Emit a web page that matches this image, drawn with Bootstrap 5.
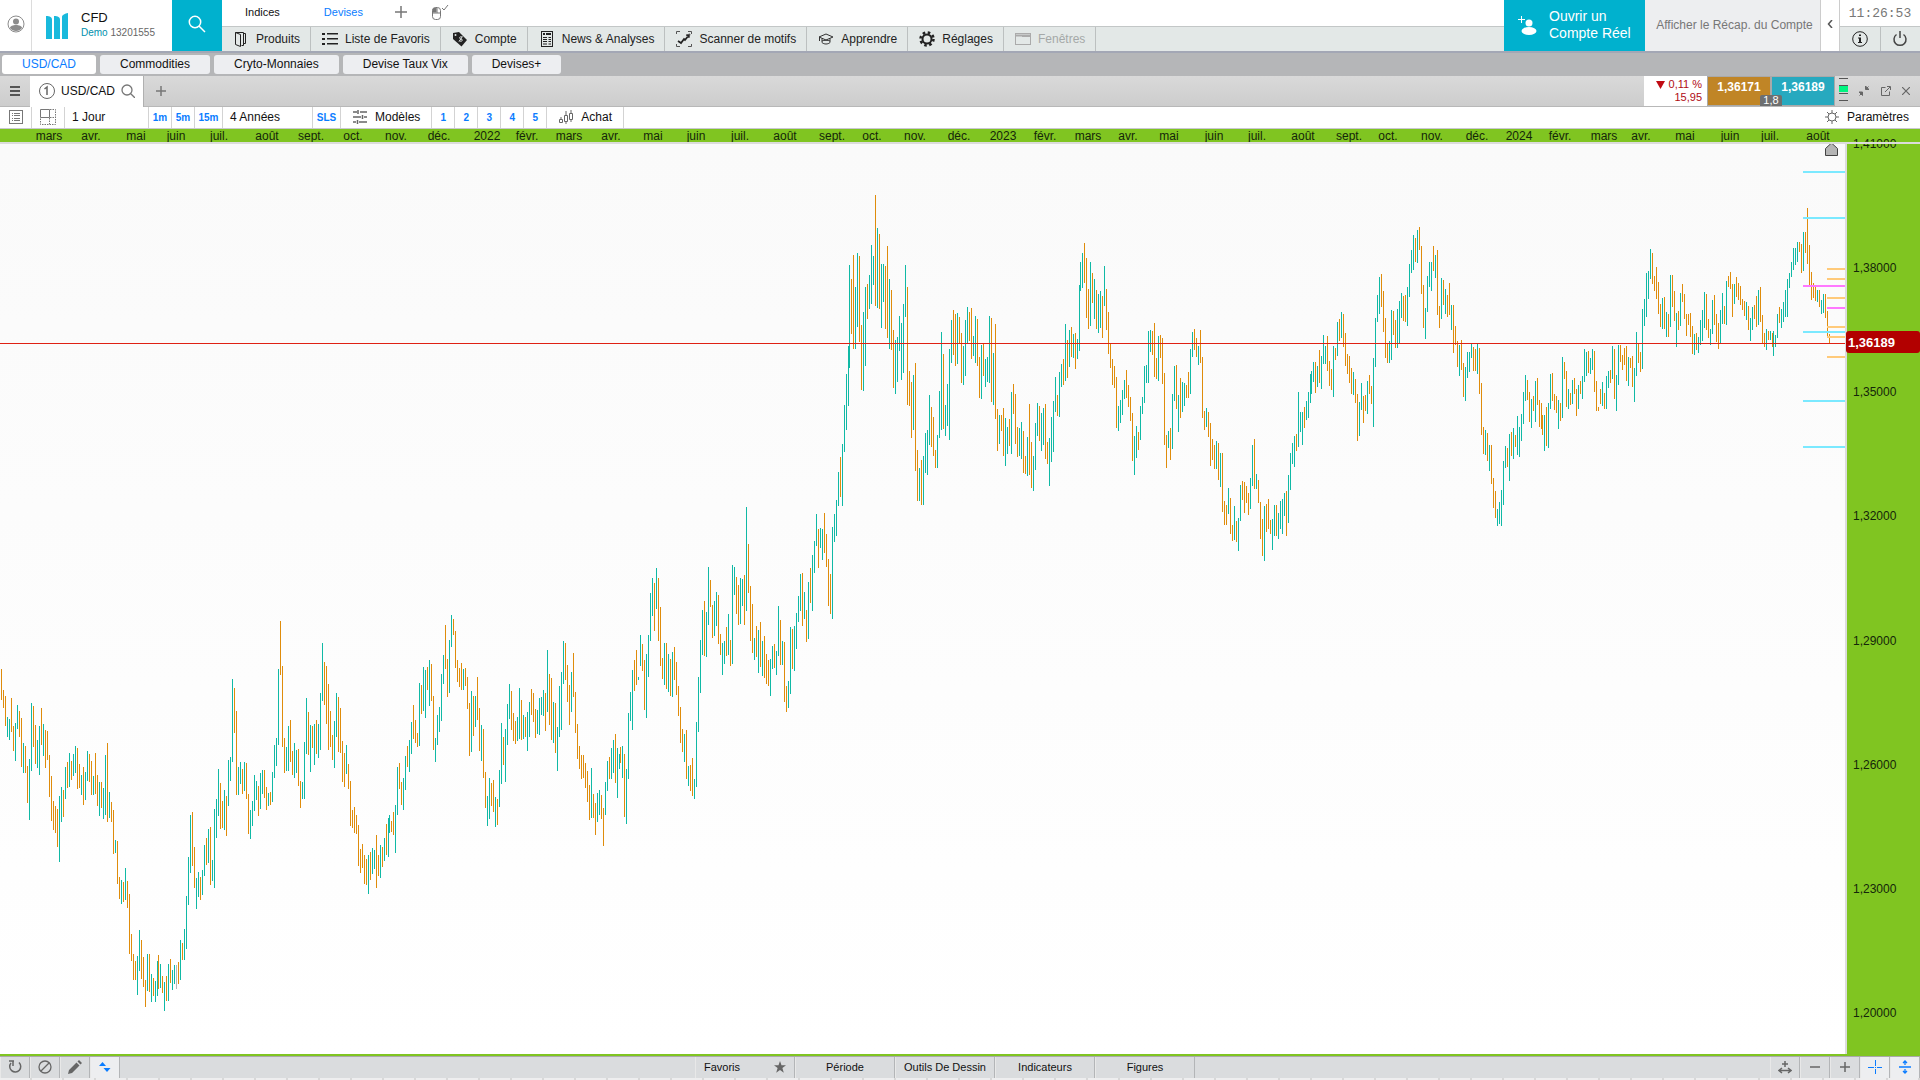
<!DOCTYPE html>
<html lang="fr">
<head>
<meta charset="utf-8">
<meta name="viewport" content="width=device-width, initial-scale=1">
<title>USD/CAD - CFD</title>
<link rel="stylesheet" href="https://cdn.jsdelivr.net/npm/bootstrap@5.3.0/dist/css/bootstrap.min.css">
<style>
  body { font-family: "Liberation Sans", Arial, sans-serif; font-size: 12px; line-height: 14px; color: #111; background: #fff; }
  button, a { font: inherit; color: inherit; text-decoration: none; }
  button { border: 0; background: none; padding: 0; white-space: nowrap; }
  svg { display: block; flex: none; }
  .app { min-height: 100vh; }
  .topbar { height: 53px; border-bottom: 2px solid #a3a7b5; }
  .topbar, .tools { white-space: nowrap; }
  .avatar { width: 32px; border-right: 1px solid #dcdcdc; padding-bottom: 3px; }
  .brand { width: 140px; padding-left: 14px; gap: 13px; }
  .brand-name { font-size: 13px; line-height: 15px; }
  .brand-id { font-size: 10px; line-height: 16px; color: #666; }
  .brand-id b { font-weight: normal; color: #0090ad; }
  .teal { background: #00b1ce; color: #fff; }
  .find { width: 50px; padding-bottom: 3px; }
  .spaces { height: 26px; font-size: 11px; padding: 0 0 2px 23px; gap: 44px; }
  .spaces .on { color: #0a7cff; }
  .spaces button + button { margin-left: -20px; }
  .spaces a + button { margin-left: -12px; }
  .menu { background: #e3e8e7; border-top: 1px solid #c3c7c7; height: 25px; }
  .menu button { padding: 0 10px 0 11px; gap: 7px; border-right: 1px solid #bcc0c0; color: #222; }
  .menu button:disabled { color: #a5a8a8; }
  .real { width: 141px; padding: 0 0 2px 14px; gap: 11px; font-size: 14px; line-height: 17px; text-align: left; }
  .recap { width: 176px; background: #edeef0; color: #777; border-right: 1px solid #ccc; padding: 0 0 2px 4px; }
  .chev { width: 19px; border-right: 1px solid #ccc; padding-bottom: 4px; }
  .clock { width: 80px; }
  .clock time { height: 26px; font: 13px/28px "Liberation Mono", monospace; color: #777; }
  .clock .half { background: #e3e8e7; border-top: 1px solid #c3c7c7; }
  .half button + button { border-left: 1px solid #bcc0c0; }
  .boards { background: #b5b6b8; height: 23px; padding: 2px; gap: 4px; }
  .boards a { background: #edeef1; border-radius: 3px; padding: 0 20px; height: 19px; line-height: 18px; }
  .boards a.on { background: #fff; color: #0a7cff; }
  .charts { height: 31px; background: linear-gradient(#d9d9d9, #cdcdcd); border-bottom: 1px solid #b8b8b8; }
  .burger { width: 30px; padding-bottom: 1px; }
  .doc { width: 114px; height: 31px; background: #fff; gap: 6px; padding: 0 0 2px 9px; border-right: 1px solid #b0b0b0; }
  .change { width: 63px; background: #fff; color: #b00b13; font-size: 11px; line-height: 13px; padding: 2px 5px 0 0; }
  .quote { width: 64px; font-weight: bold; color: #fff; padding-bottom: 8px; border: 1px solid #a9a9a9; }
  .sell { background: #c08526; }
  .buy { background: #27a9bf; }
  .spread { left: 50%; bottom: 0; width: 22px; height: 11px; line-height: 11px; font-size: 11px; background: #6d6f70; color: #fff; border-radius: 2px 2px 0 0; transform: translateX(-50%); }
  .winbtns { width: 85px; padding: 0 10px 0 4px; }
  .tools { height: 22px; border-bottom: 1px solid #c9c9d0; }
  .tools > button { border-right: 1px solid #d3d3d3; padding-bottom: 1px; }
  .tools .num { width: 23px; font-size: 10px; font-weight: bold; color: #0a7cff; padding-top: 1px; }
  .cell-a { width: 32px; } .cell-b { width: 33px; } .tools .cell-c { width: 28px; }
  .tools .pick { padding-left: 7px; text-align: left; width: 84px; }
  .tools .long { width: 90px; }
  .tools .tool { padding-left: 12px; padding-right: 11px; gap: 8px; }
  .months { background: #80c521; height: 13px; }
  .months text, .prices text { font-size: 12px; fill: #14260a; }
  .stage { border-top: 2px solid #dcdcdc; border-bottom: 2px solid #80c521; min-height: 400px; }
  .plot { background: linear-gradient(#fafafa, #fff); border-right: 2px solid #dcdcdc; position: relative; }
  .plot svg { position: absolute; inset: 0; width: 100%; height: 100%; }
  .prices { width: 73px; background: #80c521; position: relative; }
  .prices svg { position: absolute; inset: 0; width: 100%; height: 100%; overflow: visible; }
  .prices .now { font-size: 13px; font-weight: bold; fill: #fff; }
  .dock { height: 22px; background: #dadcde; border-top: 1px solid #a9a9a9; font-size: 11px; }
  .dock button { border-right: 1px solid #b3b5b7; border-left: 1px solid #e8e8e8; padding-bottom: 1px; }
  .dock .sq { width: 30px; }
  .dock .on { background: #edeef0; }
  .dock .wide { width: 100px; }
  .foot { height: 2px; background: repeating-linear-gradient(90deg, #eeeeef 0 30px, #d8d8d8 30px 32px); }
</style>
<script src="https://cdn.jsdelivr.net/npm/bootstrap@5.3.0/dist/js/bootstrap.bundle.min.js"></script>
</head>
<body>
<div class="app d-flex flex-column">

  <header class="topbar d-flex">
    <button class="avatar d-flex align-items-center justify-content-center" aria-label="Profil">
      <svg width="18" height="18" viewBox="0 0 18 18"><circle cx="9" cy="9" r="8" fill="none" stroke="#8c8c8c"/><circle cx="9" cy="6.500" r="3" fill="#8c8c8c"/><path d="M3 13c0-4 12-4 12 0-2.500 4-9.500 4-12 0z" fill="#8c8c8c"/></svg>
    </button>
    <div class="brand d-flex align-items-center">
      <svg width="22" height="26" viewBox="0 0 22 26" fill="#19b9dc"><path d="M0 3c4 0 6 1 6 4v19H0zM8 3c4 0 6 1 6 4v19H8zM16 4c0-2 3-3.500 6-4v26h-6z"/></svg>
      <div><div class="brand-name">CFD</div><div class="brand-id"><b>Demo</b> 13201555</div></div>
    </div>
    <button class="find teal d-flex align-items-center justify-content-center" aria-label="Rechercher">
      <svg width="18" height="18" viewBox="0 0 18 18" fill="none" stroke="#fff" stroke-width="1.500"><circle cx="7" cy="7" r="5.700"/><path d="M11 11l6 6"/></svg>
    </button>
    <div class="flex-fill d-flex flex-column">
      <nav class="spaces d-flex align-items-center">
        <a href="#">Indices</a><a href="#" class="on">Devises</a>
        <button aria-label="Ajouter"><svg width="12" height="12" viewBox="0 0 12 12" stroke="#777" stroke-width="1.500"><path d="M6 0v12M0 6h12"/></svg></button>
        <button aria-label="Souris"><svg width="18" height="17" viewBox="0 0 18 17" fill="none" stroke="#777"><rect x="1.500" y="3.500" width="8" height="12" rx="3"/><path d="M2 9h8M6 4v5"/><path d="M2 8V5l3-1v4z" fill="#777"/><path d="M11 4l2 2 4-5"/></svg></button>
      </nav>
      <div class="menu flex-fill d-flex">
        <button class="d-flex align-items-center"><svg width="16" height="16" viewBox="0 0 16 16" fill="none" stroke="#222"><path d="M2.500 1.500h8v13h-2M2.500 1.500l5 2v12l-5-2zM10.500 2.500h2v10h-2"/></svg>Produits</button>
        <button class="d-flex align-items-center"><svg width="16" height="16" viewBox="0 0 16 16" fill="#222"><path d="M0 2h3v2H0zM5 2h11v1.500H5zM0 7h3v2H0zM5 7h11v1.500H5zM0 12h3v2H0zM5 12h11v1.500H5z"/></svg>Liste de Favoris</button>
        <button class="d-flex align-items-center"><svg width="16" height="16" viewBox="0 0 16 16"><path d="M1 2l6-1 8 8-5.500 6.500L1 8z" fill="#222"/><circle cx="3.500" cy="4" r="1" fill="#e3e8e7"/><path d="M10 6c-3-1-3 2-1 2s2 3-1.500 2M10.500 5.500l-3.500 5" fill="none" stroke="#e3e8e7"/></svg>Compte</button>
        <button class="d-flex align-items-center"><svg width="16" height="16" viewBox="0 0 16 16" fill="none" stroke="#222"><rect x="2.500" y=".5" width="11" height="15"/><path d="M4 3h2M7 3h5" stroke-width="2"/><path d="M4 6.500h4M4 8.500h4M4 10.500h4M4 13h4M9.500 6.500H12M9.500 8.500H12M9.500 10.500H12M9.500 13H12"/></svg>News &amp; Analyses</button>
        <button class="d-flex align-items-center"><svg width="16" height="16" viewBox="0 0 16 16" fill="none" stroke="#555"><path d="M.5 3V.5H4M12 .5h3.500V3M.5 13v2.500H4M12 15.500h3.500V13"/><path d="M2 10l3 2 3-4 1 1 4-5" stroke="#222" stroke-width="1.800"/><path d="M10 4l4-1-1 4z" fill="#222"/></svg>Scanner de motifs</button>
        <button class="d-flex align-items-center"><svg width="16" height="16" viewBox="0 0 16 16" fill="none" stroke="#333"><path d="M1 6l7-3 7 3-7 3zM4 7.500v4c2 2 6 2 8 0v-4M4 10c2-1 6-1 8 0M1.500 6v4"/></svg>Apprendre</button>
        <button class="d-flex align-items-center"><svg width="16" height="16" viewBox="0 0 16 16" fill="none" stroke="#222"><circle cx="8" cy="8" r="4.500" stroke-width="2"/><circle cx="8" cy="8" r="6.500" stroke-width="2.500" stroke-dasharray="2.550"/></svg>Réglages</button>
        <button class="d-flex align-items-center" disabled><svg width="16" height="16" viewBox="0 0 16 16" fill="none" stroke="#aaa"><rect x=".5" y="2.500" width="15" height="11"/><path d="M1 4.500h14" stroke-width="2"/><path d="M7 5.500h8" stroke-width="1"/></svg>Fenêtres</button>
      </div>
    </div>
    <button class="real teal d-flex align-items-center">
      <svg width="20" height="20" viewBox="0 0 20 20" fill="#fff"><circle cx="11" cy="8" r="3.500"/><ellipse cx="11" cy="16" rx="7.500" ry="4"/><path d="M3 1h1v3h3v1H4v3H3V5H0V4h3z"/></svg>
      <span>Ouvrir un<br>Compte Réel</span>
    </button>
    <button class="recap">Afficher le Récap. du Compte</button>
    <button class="chev d-flex align-items-center justify-content-center" aria-label="Replier"><svg width="6" height="8" viewBox="0 0 6 8" fill="none" stroke="#555" stroke-width="1.500"><path d="M5 0L1.500 4 5 8"/></svg></button>
    <div class="clock d-flex flex-column">
      <time class="text-center">11:26:53</time>
      <div class="half flex-fill d-flex">
        <button class="flex-fill d-flex align-items-center justify-content-center" aria-label="Informations"><svg width="16" height="16" viewBox="0 0 16 16"><circle cx="8" cy="8" r="7.300" fill="none" stroke="#222"/><path d="M7 3.500h2v1.500H7zM6 6.500h3V11h1v1H6v-1h1V7.500H6z" fill="#222"/></svg></button>
        <button class="flex-fill d-flex align-items-center justify-content-center" aria-label="Quitter"><svg width="16" height="16" viewBox="0 0 16 16" fill="none" stroke="#444" stroke-width="1.500"><path d="M4.500 3.500a6 6 0 1 0 7 0M8 0v7"/></svg></button>
      </div>
    </div>
  </header>

  <nav class="boards d-flex">
    <a href="#" class="on">USD/CAD</a><a href="#">Commodities</a><a href="#">Cryto-Monnaies</a><a href="#">Devise Taux Vix</a><a href="#">Devises+</a>
  </nav>

  <div class="charts d-flex">
    <button class="burger d-flex align-items-center justify-content-center" aria-label="Menu"><svg width="10" height="10" viewBox="0 0 10 10" fill="#555"><path d="M0 0h10v2H0zM0 4h10v2H0zM0 8h10v2H0z"/></svg></button>
    <div class="doc d-flex align-items-center">
      <svg width="16" height="16" viewBox="0 0 16 16" fill="none" stroke="#666"><circle cx="8" cy="8" r="7.500"/><path d="M5.500 6L8 4v8" stroke-width="1.500"/></svg><span>USD/CAD</span>
      <svg width="14" height="14" viewBox="0 0 14 14" fill="none" stroke="#777" stroke-width="1.300"><circle cx="6" cy="6" r="5"/><path d="M9.500 9.500L14 14"/></svg>
    </div>
    <button class="ms-2 ps-1" aria-label="Nouvel onglet"><svg width="10" height="10" viewBox="0 0 10 10" stroke="#777" stroke-width="1.500"><path d="M5 0v10M0 5h10"/></svg></button>
    <div class="change ms-auto text-end"><svg class="d-inline-block me-1" width="9" height="8" viewBox="0 0 9 8"><path d="M0 0h9L4.500 8z" fill="#c00b13"/></svg>0,11 %<br>15,95</div>
    <div class="d-flex position-relative">
      <button class="quote sell">1,36171</button><button class="quote buy">1,36189</button>
      <span class="spread position-absolute text-center">1,8</span>
    </div>
    <div class="winbtns d-flex align-items-center justify-content-between">
      <svg width="9" height="28" viewBox="0 0 9 28"><path d="M0 1.500h9M0 8.500h9M0 16.500h9M0 23.500h9" stroke="#555"/><path d="M0 9h9v6H0z" fill="#00f480"/></svg>
      <button aria-label="Réduire"><svg width="10" height="10" viewBox="0 0 10 10" fill="#666" stroke="#666"><path d="M6.500 0v3.500H10zM0 6h3.500v3.500zM9.500.5l-2 2M.5 9.500l2-2"/></svg></button>
      <button aria-label="Détacher"><svg width="10" height="10" viewBox="0 0 10 10" fill="none" stroke="#666"><path d="M4.500 1.500h-4v8h8v-4M4 6l5-5M6 .5h3.500V4"/></svg></button>
      <button aria-label="Fermer"><svg width="8" height="8" viewBox="0 0 8 8" stroke="#666" stroke-width="1.200"><path d="M0 0l8 8M8 0L0 8"/></svg></button>
    </div>
  </div>

  <div class="tools d-flex">
    <button class="cell-a d-flex align-items-center justify-content-center" aria-label="Liste"><svg width="14" height="14" viewBox="0 0 14 14" fill="none" stroke="#777"><rect x=".5" y=".5" width="13" height="13"/><path d="M3 3.500h1M5 3.500h6M3 5.500h1M5 5.500h6M3 8.500h1M5 8.500h6M3 10.500h1M5 10.500h6"/></svg></button>
    <button class="cell-b d-flex align-items-center justify-content-center" aria-label="Disposition"><svg width="16" height="16" viewBox="0 0 16 16" fill="none" stroke="#777"><path d="M.5.5h9v8h-9z"/><path d="M10 .5h5.500v15H.5V9M9.500 9v6M10 8.500h6" stroke-dasharray="1.500 1"/></svg></button>
    <button class="pick">1 Jour</button>
    <button class="num">1m</button><button class="num">5m</button><button class="num cell-c">15m</button>
    <button class="pick long">4 Années</button>
    <button class="num cell-c">SLS</button>
    <button class="tool d-flex align-items-center"><svg width="14" height="14" viewBox="0 0 14 14" fill="none" stroke="#666" stroke-width="1.500"><path d="M0 2h4M7 2h7M0 7h8M11 7h3M0 12h3M6 12h8M5 0v4M9.500 5v4M4.500 10v4"/></svg>Modèles</button>
    <button class="num">1</button><button class="num">2</button><button class="num">3</button><button class="num">4</button><button class="num">5</button>
    <button class="tool d-flex align-items-center"><svg width="14" height="14" viewBox="0 0 14 14" fill="none" stroke="#666"><path d="M.5 9.500h3v3h-3zM2 7v2M5.500 5.500h3v6h-3zM7 1v4M7 12v2M10.500 3.500h3v6h-3zM12 0v3M12 10v2"/></svg>Achat</button>
    <button class="tool ms-auto d-flex align-items-center border-0"><svg width="14" height="14" viewBox="0 0 14 14" fill="none" stroke="#666"><circle cx="7" cy="7" r="4"/><path d="M7 0v3M7 11v3M0 7h3M11 7h3M2 2l2 2M10 10l2 2M12 2l-2 2M4 10l-2 2"/></svg>Paramètres</button>
  </div>

  <div class="months"><svg id="months" width="100%" height="13" text-anchor="middle"></svg></div>

  <main class="stage flex-fill d-flex">
    <div class="plot flex-fill">
      <svg viewBox="0 144 1845 910" preserveAspectRatio="none" id="plot" role="img" aria-label="USD/CAD, 1 Jour, 4 Années"></svg>
    </div>
    <div class="prices"><svg id="prices"></svg></div>
  </main>

  <footer>
    <div class="dock d-flex justify-content-between">
      <div class="d-flex">
        <button class="sq d-flex align-items-center justify-content-center" aria-label="Actualiser"><svg width="14" height="14" viewBox="0 0 14 14" fill="none" stroke="#666" stroke-width="1.500"><path d="M3 3a5.500 5.500 0 1 0 8-.5M1 1h5M5 1v5"/></svg></button>
        <button class="sq d-flex align-items-center justify-content-center" aria-label="Effacer"><svg width="14" height="14" viewBox="0 0 14 14" fill="none" stroke="#666" stroke-width="1.300"><circle cx="7" cy="7" r="6"/><path d="M3 11l8-8"/></svg></button>
        <button class="sq d-flex align-items-center justify-content-center" aria-label="Dessiner"><svg width="14" height="14" viewBox="0 0 14 14" fill="#666"><path d="M0 14l1-4 7.500-7.500 3 3L4 13zM9.500 1.500L11 0l3 3-1.500 1.500z"/></svg></button>
        <button class="sq on d-flex align-items-center justify-content-center" aria-label="Échelle"><svg width="12" height="12" viewBox="0 0 12 12" fill="#0a7cff"><path d="M0 5l3.500-4L7 5zM4.500 7h7L8 11z"/></svg></button>
      </div>
      <div class="d-flex">
        <button class="wide d-flex align-items-center justify-content-between px-2">Favoris<svg width="12" height="12" viewBox="0 0 12 12" fill="#666"><path d="M6 0l1.500 4.300H12L8.400 7l1.400 4.700L6 9l-3.800 2.700L3.600 7 0 4.300h4.500z"/></svg></button>
        <button class="wide">Période</button><button class="wide">Outils De Dessin</button><button class="wide">Indicateurs</button><button class="wide">Figures</button>
      </div>
      <div class="d-flex">
        <button class="sq d-flex align-items-center justify-content-center" aria-label="Ajuster"><svg width="14" height="14" viewBox="0 0 14 14" fill="none" stroke="#666" stroke-width="1.500"><path d="M7 1v6M4 4h6M2 10.500h10M4 8l-3 2.500L4 13M10 8l3 2.500L10 13"/></svg></button>
        <button class="sq d-flex align-items-center justify-content-center" aria-label="Zoom arrière"><svg width="10" height="10" viewBox="0 0 10 10" stroke="#666" stroke-width="1.500"><path d="M0 5h10"/></svg></button>
        <button class="sq d-flex align-items-center justify-content-center" aria-label="Zoom avant"><svg width="10" height="10" viewBox="0 0 10 10" stroke="#666" stroke-width="1.500"><path d="M0 5h10M5 0v10"/></svg></button>
        <button class="sq on d-flex align-items-center justify-content-center" aria-label="Réticule"><svg width="14" height="14" viewBox="0 0 14 14" stroke="#0a7cff"><path d="M7.500 0v6M7.500 9v5M0 7.500h6M9 7.500h5M7 7.500h1"/></svg></button>
        <button class="sq on d-flex align-items-center justify-content-center" aria-label="Échelle verticale"><svg width="14" height="14" viewBox="0 0 14 14" fill="none" stroke="#0a7cff"><path d="M1 7h12M7 1v4M7 9v4M5 3l2-2 2 2M5 11l2 2 2-2" stroke-width="1.300"/></svg></button>
      </div>
    </div>
    <div class="foot"></div>
  </footer>
</div>

<script>
// Daily bars, two units apart. u = up, d = down, then high-low in thirds of a unit
// below the block's base line; ">" marks a bar one unit after the previous one.
const blocks = [
 [1, 600, `d207-300 d270-324 d288-378 u351-411 u357-420 d294-396 d378-453 u369-483 u315-387 d333-411 d354-501 u429-519 d438-519 d498-609 u477-660 u309-513 d318-441 d375-492 u420-504 u378-525 d324-435 u372-468 d390-504 d393-480 d465-591 d528-663 d603-690 d618-699 d627-741 u588-786 u561-666 d570-651 u501-597 d486-564 u459-561 d483-540 u462-528 u438-519 d444-567 d492-564 u525-585 d501-615 u516-600 u453-543 d462-546 d483-585 u528-585 d459-582 d525-618 u546-648 d546-624 u564-657 u465-645 d429-666 u576-654 d606-666 d630-762 u720-759 d723-852 d831-897 u840-912 d846-906 u804-900 d843-924 d882-1062 d1002-1083 d1062-1140 d1083-1140 u1068-1185 u990-1113 d1020-1137 d1071-1161 d1140-1221 u1062-1173 d1062-1176 u1122-1206 d1134-1188 u1143-1206 u1083-1188`],
 [158, 600, `d1065-1167 u1092-1164 d1128-1179 u1146-1233 d1128-1203 u1092-1203 d1077-1149 u1110-1170 u1095-1152 n1095-1167 d1086-1152 u1020-1140 d1029-1080 u987-1080 u888-1047 u771-915 u645-819 d636-798 d741-864 u834-927 u816-891 d831-900 u810-885 u735-828 d714-795 u687-789 d681-855 u780-843 u627-864 u597-714 u507-648 d549-687 d603-684 u570-690 d588-708 u480-618 u471-543 u237-486 d264-399 d333-585 u501-585 u486-552 d507-582 u486-573 d489-597 d582-702 u630-717 u603-678 u525-633 u543-600 d558-648 u519-627 u510-582 d510-594 d561-630 u579-618 d576-615 u516-606 u435-534 u414-498 u207-435 d63-225 d198-441 d414-519 u441-513 u378-513 d360-486 d453-525 u429-534 u450-519 d447-558 d543-624 u546-597 u426-597 u294-462 d336-465 u375-516 d378-444 u372-495 d360-462 u372-474 u279-450 u129-303 d186-315 d198-372 d252-450 d333-441 d405-480 u363-504 u279-411 d291-456 d324-459 d423-546 d459-561 u435-522 d492-567 d543-678 d630-684 d621-699 d645-702 d675-798 d747-819 d732-804 d765-852 d777-855 u765-882 d756-840 u744-822 u750-807 d705-864 d765-828 u735-834 d741-801 u714-783 d672-765 u654-771`],
 [389, 600, `u645-699 d663-696 d636-705 u615-759 u501-645 d489-567 d546-615 u534-630 u468-570 d438-501 u420-516 u366-462 d315-417 d360-429 d399-441 u249-438 d255-342 u201-333 u210-354 d201-270 u180-318 d192-303 d288-450 u414-486 u345-435 u321-396 u222-363 u165-252 d75-207 d177-291 u120-279 u45-141 d57-105 d93-204 d180-246 d204-261 d189-270 u207-270 d204-258 d231-327 d309-468 u273-456 d288-408 u288-381 d231-360 d324-453 u375-483 d387-534 d516-624 u588-678 u534-657 d549-618 d540-636 u591-681 d597-675 u510-621 u369-552 d411-495 u387-546 u312-435 u252-357 d273-390 d339-423 d363-432 u351-423 u264-417 d300-420 u345-417 d351-411 u336-453 u306-411 d267-345 d279-366 d327-414 u330-402 u294-405 u291-345 u270-348 d279-393 u150-336 d222-375 d234-420 u306-429 d309-459 u381-513 u258-411 u216-390 u123-252 d129-240 d195-306 d255-375 u216-336 d159-291 d276-399 d372-477 d438-507 d465-537 d465-534 d489-564 d513-606 d555-660 u504-654 d582-654 d609-705 u579-666 u570-645`],
 [601, 480, `d945-1017 d984-1098 u906-1005 u843-933 d831-897 u804-897 u780-879 d762-909 u804-954 u822-867 >d801-849 u798-894 d822-1011 u867-1032 u699-897 u636-723 u570-750 d540-633 d510-615 u591-600 u465-558 d492-573 d540-690 u522-714 u465-591 u339-483 u294-408 d309-453 u264-387 d294-483 d381-558 d534-597 u489-615 d489-627 u522-636 d537-648 u516-651 d501-600 d546-645 d618-708 d681-789 d747-816 u762-846 d750-897 u858-918 d855-933 d834-948 u897-957 u726-921 u591-756 u480-639 u390-525 d363-528 u396-531 u261-435 d300-381 d375-474 u363-468 u336-438 d345-492 d462-525 u489-585 u483-552 d441-528 u402-525 d480-558 u255-552 u261-345 d291-402 d315-435 u294-432 u297-378 d285-435 u81-393 d192-339 d318-483 d372-519 u474-540 d438-531 u450-579 d426-561 u483-588 d468-594 d522-612 d540-618 u537-648 u498-567 d492-564 u513-585 u378-528 d420-555 u483-555 d486-666 d618-696 u603-684 u441-642 d447-567 u438-573 u399-507 u348-426 u282-393 d279-438 u336-417 d390-486 u306-477 d264-369 u225-393 u183-279 u102-198 d147-264 u144-204 u147-240 d99-219 d162-261 d237-378 d282-402 u141-417 u102-186 u60-168`],
 [838, 180, `u876-978 d831-951 u792-978 u675-816 u582-750 u498-678 >u255-564 d297-462 d225-507 u321-507 u219-441 d228-486 d435-630 u396-633 u321-558 d312-417 u285-387 u195-372 u228-315 d45-378 u144-384 d162-387 u252-444 u252-366 d258-447 d198-474 u297-507 d330-510 d450-624 u480-642 u471-606 u408-513 u429-600 u372-579 u255-411 d321-675 d573-678 d606-774 u585-750 d549-873 d810-963 u864-963 d840-975 u828-975 u759-879 u750-885 u645-795 d681-801 d711-828 d810-864 u765-864 u633-774 u456-750 d522-747 u675-768 u612-738 u507-780 u420-549 d390-525 d402-558 u399-552 d411-492 d459-609 u498-615 u420-588 u381-489 d396-483 d384-537 u468-528 u408-549 d417-558 d531-654 u495-657 d489-588 u537-621 u531-606 u408-609 d414-666 u519-675 d432-717 d687-813 u705-792 d705-753 d684-828 u714-858 u741-822 d717-798 u636-822 d612-702 d642-792 d741-831 u744-828 u726-837 d753-879 d828-882 u771-888 d672-885 d786-924 u828-933 u729-870 u669-768 d678-783 u699-813 u684-795 d672-837 d786-852 u774-918 u711-846 u663-816 u591-696 d645-708 u576-711 u552-621 d537-615 u432-603 d480-594 u450-561 d441-531 u462-534 d459-567 u477-537 u315-513 >u246-333 u219-324 d189-309 d234-414 d327-447 u246-438 d279-369 u297-417 d330-447 u342-459 u333-444 d348-474 u258-378 d327-450 d396-522 d489-564 d537-615 d558-624 d591-744 u678-753 u660-729 u630-705 u600-657 d570-654 d615-681 d651-723 d699-843 u768-885 u738-834 d756-810 u678-780 u651-702 u558-669 u555-609 u453-609 u450-516 d453-525 d429-591 d534-597 u468-603 d465-534 d474-612 d579-795 d765-864 u753-804 d744-840 u642-807 u558-663 d555-687 u645-756 d594-714 u606-696 u609-678 d615-654 d576-654 u507-642 u456-531 d447-510 d474-531 u498-555`],
 [1200, 200, `d390-489 d471-654 d633-690 u624-681 d636-711 d669-798 d717-780 d735-807 u723-807 d729-840 u759-861 d759-936 d903-975 d915-975 u864-942 d894-1002 d975-1023 u918-1020 d963-1026 u954-1053 u855-963 d843-900 d846-939 d858-909 d879-945 u834-927 u735-858 d717-867 u822-867 d840-909 d906-1017 d957-1068 u918-1083 d912-996 d897-987 d960-1002 u957-1050 u915-1008 d915-1008 u939-1017 u903-987 u897-1002 u879-948 d873-1008 u825-969 u759-870 u729-792 u708-801 d702-753 u576-741 u636-696 u636-735 d621-684 u603-660 u576-654 u522-609 >u513-582 u486-546 d486-579 u498-561 d450-549 u468-567 u405-492 u438-492 d408-513 d483-558 d507-570 u438-591 d444-480 u366-468 d357-423 u336-414 d342-441 d399-498 d462-522 d468-549 d504-582 u516-585 d537-609 d582-723 u606-708 u549-630 d588-669 d585-633 u543-642 d525-582 d558-612 u474-681 u354-501 u285-366 u231-342 d222-321 d273-396 d354-474 d432-489 u423-489 u330-480 d333-405 d360-444 u327-444 u303-432 u279-354 d288-363 d285-366 u261-378 u192-291 u150-219 u105-210 d114-186 u90-189 d81-150 d138-282 d255-384 u324-417 u228-336 u186-261 u186-273 d138-213 u165-234 d150-345 d318-384 u234-357 d240-315 u267-342 d285-351 d249-345 u315-390 d315-459 d378-435 d423-501 u435-528 d420-510 d489-591 u501-603 u456-534 u456-516 u432-474 d441-513 d447-513 u432-522 d444-582 d549-705 d681-762 u690-765 d699-783 u735-813 d735-852 d834-924 d873-954 u927-978 u906-972`],
 [1501, 180, `u930-1038 u843-975 u798-864 d804-861 u762-903 d756-828 u744-837 d765-801 u708-825 u741-831 u702-783 u636-732 u585-663 d600-660 d636-726 u657-744 d648-693 u603-726 d594-675 d660-741 d669-747 >d705-765 u705-813 d681-798 u669-804 u582-687 d579-663 d642-690 d648-699 u660-747 d669-723 u531-714 d546-597 d573-681 u627-687 d639-675 u600-672 d594-642 d627-708 u615-687 d603-642 u588-657 u507-606 u516-588 d513-579 u534-582 u507-570 d513-636 d603-693 d681-693 d627-672 u606-678 d639-687 u588-687 u573-624 d570-609 u498-597 d507-657 u585-693 u495-615 d495-546 d525-570 d504-555 d498-603 u531-618 d534-564 d528-621 u564-666 u456-588 d489-549 d516-576 u387-567 u357-438 u279-411 u273-357 u207-297 d219-312 d288-333 d261-357 d306-402 d372-441 u354-447 d351-447 u396-471 d402-471 u285-441 d285-381 d333-423 u399-501 d393-450 u339-438 d312-366 d342-417 d402-468 d402-435 d399-471 d438-522 u462-525 d459-510 u471-519 u420-495 u390-483 u336-444 d342-450 d417-474 u447-495 u360-462 d345-435 d402-486 d429-507 u390-492 u339-432 d378-432 u303-435 d288-321 d276-327 d312-411 u312-372 d291-351 d309-360 d318-375 d357-390 d363-408 u366-420 d378-450 u414-483 u381-450 d375-417 d348-441 u330-435 d321-426 d405-492 d459-501 u447-510 d453-480 u453-480 d459-501 >u453-528 u465-501 u402-474 d381-429 u387-444 u366-426 u330-411 u297-411 u279-324 u246-291 u204-270 u204-255 u186-246 d186-216 d192-279 u156-273 d156-219 d84-252 d195-315 d276-360 d309-354 d315-363 u330-366 d330-381 u360-402 u342-399 d342-414 d393-474 d462-489`]
];
const paths = { u: '', d: '', n: '' };
for (const [start, base, text] of blocks) {
  let x = start - 2;
  text.split(' ').forEach((token, i) => {
    x += token[0] === '>' ? 1 : 2;
    const bar = token.replace('>', '');
    const [hi, lo] = bar.slice(1).split('-').map(v => base + Math.round(v / 3));
    paths[bar[0]] += `M${x} ${hi}h1V${lo}h-1z`;
  });
}
const levels = [
  ['#7be9ff', 1803, [171, 217, 331, 400, 446]],
  ['#ffca7a', 1827, [268, 278, 297, 326, 336, 356]],
  ['#ff78ff', 1803, [285]], ['#ff78ff', 1827, [307]]
];
document.getElementById('plot').innerHTML =
  `<g shape-rendering="crispEdges"><path d="${paths.u}" fill="#10b9a5"/><path d="${paths.d}" fill="#df8c0b"/><path d="${paths.n}" fill="#b5b9bd"/>` +
  levels.map(([c, x, ys]) => ys.map(y => `<rect x="${x}" y="${y}" width="${1845 - x}" height="2" fill="${c}"/>`).join('')).join('') +
  `<rect y="343" width="1845" height="1" fill="#df2114"/></g>` +
  `<path d="M1825.500 155.500v-7l6-5.500 6 5.500v7z" fill="#b5b5b5" stroke="#444"/>`;

const months = [['mars',49],['avr.',91],['mai',136],['juin',176],['juil.',219],['août',267],['sept.',311],['oct.',353],['nov.',396],['déc.',439],['2022',487],['févr.',527],['mars',569],['avr.',611],['mai',653],['juin',696],['juil.',740],['août',785],['sept.',832],['oct.',872],['nov.',915],['déc.',959],['2023',1003],['févr.',1045],['mars',1088],['avr.',1128],['mai',1169],['juin',1214],['juil.',1257],['août',1303],['sept.',1349],['oct.',1388],['nov.',1432],['déc.',1477],['2024',1519],['févr.',1560],['mars',1604],['avr.',1641],['mai',1685],['juin',1730],['juil.',1770],['août',1818]];
document.getElementById('months').innerHTML = months.map(([m, x]) => `<text x="${x / 19.2}%" y="11">${m}</text>`).join('');

const at = y => (y - 144) / 9.1 + '%';
document.getElementById('prices').innerHTML =
  ['1,41000','1,38000','1,35000','1,32000','1,29000','1,26000','1,23000','1,20000']
    .map((p, i) => `<text x="6" y="${at(148 + Math.round(i * 869 / 7))}">${p}</text>`).join('') +
  `<rect x="-2" y="-2" width="75" height="2" fill="#dcdcdc"/>` +
  `<svg x="-1" y="${at(331)}" width="74" height="22"><rect width="74" height="22" rx="3" fill="#b20000"/><text class="now" x="2" y="16">1,36189</text></svg>`;
</script>
</body>
</html>
